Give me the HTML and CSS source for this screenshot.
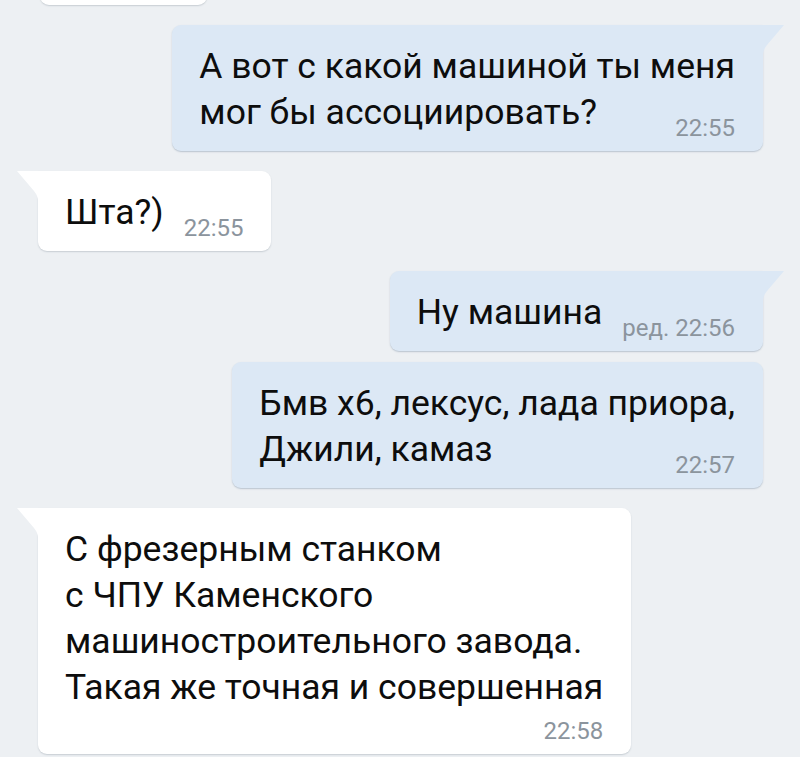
FILE: index.html
```html
<!DOCTYPE html>
<html lang="ru">
<head>
<meta charset="utf-8">
<title>Чат</title>
<link rel="stylesheet" href="styles.css">
</head>
<body>
<div class="chat">
  <div class="msg in cut"></div>

  <div class="msg out tail">
    <div class="line">А вот с какой машиной ты меня</div>
    <div class="line last"><span>мог бы ассоциировать?</span><span class="time">22:55</span></div>
  </div>

  <div class="msg in tail">
    <div class="line last"><span>Шта?)</span><span class="time">22:55</span></div>
  </div>

  <div class="msg out tail">
    <div class="line last"><span>Ну машина</span><span class="time">ред. 22:56</span></div>
  </div>

  <div class="msg out next">
    <div class="line">Бмв х6, лексус, лада приора,</div>
    <div class="line last"><span>Джили, камаз</span><span class="time">22:57</span></div>
  </div>

  <div class="msg in tail">
    <div class="line">С фрезерным станком</div>
    <div class="line">с ЧПУ Каменского</div>
    <div class="line">машиностроительного завода.</div>
    <div class="line">Такая же точная и совершенная</div>
    <div class="time own">22:58</div>
  </div>
</div>
</body>
</html>
```

FILE: styles.css
```css
html, body {
  margin: 0;
  padding: 0;
}
body {
  width: 800px;
  height: 757px;
  overflow: hidden;
  background: #edf0f3;
  font-family: Roboto, "Noto Sans", sans-serif;
  color: #0d0d0d;
}
.chat {
  display: flex;
  flex-direction: column;
  align-items: flex-start;
  gap: 20px;
  margin-top: -17px;
}
.msg {
  position: relative;
  padding: 18px 28px 16px 27px;
  border-radius: 9px;
  font-size: 35.5px;
  line-height: 46px;
  white-space: nowrap;
}
.msg.in {
  align-self: flex-start;
  margin-left: 38px;
  background: #ffffff;
  box-shadow: 0 1px 1.5px rgba(70, 85, 100, 0.22);
}
.msg.out {
  align-self: flex-end;
  margin-right: 37px;
  background: #dce8f5;
  box-shadow: 0 1px 1.5px rgba(70, 95, 125, 0.3);
}
.msg.cut {
  width: 113px;
  height: 22px;
  margin-left: 40px;
  padding: 0 27px;
}
.msg.next {
  margin-top: -9px;
}
.msg.in.tail {
  border-top-left-radius: 0;
}
.msg.out.tail {
  border-top-right-radius: 0;
}
.msg.tail::before {
  content: "";
  position: absolute;
  top: 0;
  width: 22px;
  height: 30px;
}
.msg.in.tail::before {
  left: -21px;
  background: #ffffff;
  clip-path: path("M22 0 L0 0 L17 20 Q21 25 21 30 L22 30 Z");
}
.msg.out.tail::before {
  right: -21px;
  background: #dce8f5;
  clip-path: path("M0 0 L22 0 L5 20 Q1 25 1 30 L0 30 Z");
}
.line.last {
  display: flex;
  justify-content: space-between;
  align-items: flex-end;
  gap: 20px;
}
.time {
  font-size: 24px;
  line-height: 24px;
  color: #8b949d;
  margin-bottom: -5px;
}
.time.own {
  text-align: right;
  margin: 9px 0 -5px;
}
```
